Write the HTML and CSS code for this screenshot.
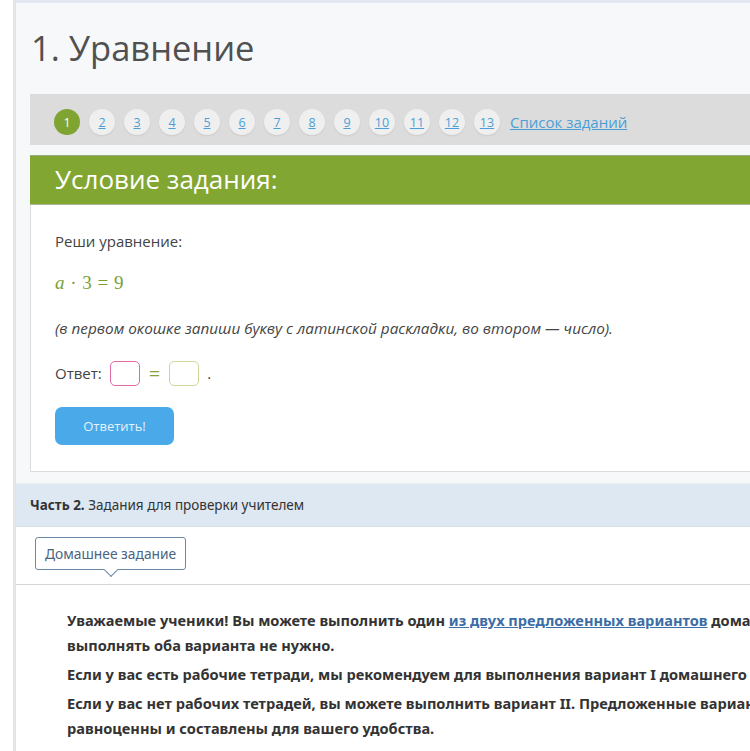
FILE: index.html
```html
<!DOCTYPE html>
<html lang="ru">
<head>
    <meta charset="UTF-8">
    <meta name="viewport" content="width=device-width, initial-scale=1.0">
    <title>1. Уравнение</title>
    <link rel="stylesheet" href="styles.css">
</head>
<body>
    <div class="page">
        <div class="task">
            <h1>1. Уравнение</h1>

            <div class="pager">
                <span class="pager-item active">1</span>
                <a class="pager-item" href="#">2</a>
                <a class="pager-item" href="#">3</a>
                <a class="pager-item" href="#">4</a>
                <a class="pager-item" href="#">5</a>
                <a class="pager-item" href="#">6</a>
                <a class="pager-item" href="#">7</a>
                <a class="pager-item" href="#">8</a>
                <a class="pager-item" href="#">9</a>
                <a class="pager-item" href="#">10</a>
                <a class="pager-item" href="#">11</a>
                <a class="pager-item" href="#">12</a>
                <a class="pager-item" href="#">13</a>
                <a class="pager-list" href="#">Список заданий</a>
            </div>

            <div class="task-head">Условие задания:</div>
            <div class="task-body">
                <p class="task-text">Реши уравнение:</p>
                <p class="formula"><i>a</i> · 3 = 9</p>
                <p class="hint">(в первом окошке запиши букву с латинской раскладки, во втором — число).</p>
                <div class="answer">
                    <span>Ответ:</span>
                    <span class="box box-pink"></span>
                    <span class="eq">=</span>
                    <span class="box box-green"></span>
                    <span>.</span>
                </div>
                <button class="submit">Ответить!</button>
            </div>
        </div>

        <div class="part">
            <b>Часть 2.</b> Задания для проверки учителем
        </div>

        <div class="tabs">
            <span class="tab">Домашнее задание</span>
        </div>

        <div class="homework">
            <p>Уважаемые ученики! Вы можете выполнить один <a href="#">из двух предложенных вариантов</a> домашнего задания,<br>выполнять оба варианта не нужно.</p>
            <p>Если у вас есть рабочие тетради, мы рекомендуем для выполнения вариант I домашнего задания.</p>
            <p>Если у вас нет рабочих тетрадей, вы можете выполнить вариант II. Предложенные варианты домашнего задания<br>равноценны и составлены для вашего удобства.</p>
        </div>
    </div>
</body>
</html>
```

FILE: styles.css
```css
* {
    margin: 0;
    padding: 0;
    box-sizing: border-box;
}

body {
    background: #fff;
    font-family: 'Open Sans', sans-serif;
    color: #444;
    overflow: hidden;
}

.page {
    width: 1200px;
    margin-left: 13px;
    border-left: 3px solid #e2e4e7;
    border-top: 3px solid #e1e8f0;
    background: #f7f8f9;
}

.task {
    padding-left: 14px;
}

h1 {
    font-size: 34.5px;
    font-weight: 400;
    line-height: 40px;
    color: #505050;
    padding: 25px 0 26px 1px;
}

.pager {
    display: flex;
    align-items: center;
    gap: 9px;
    height: 51px;
    padding: 5px 0 0 24px;
    background: #dcdcdc;
}

.pager-item {
    width: 26px;
    height: 26px;
    border-radius: 50%;
    background: #efefef;
    box-shadow: 0 1px 2px rgba(0, 0, 0, 0.08);
    display: flex;
    align-items: center;
    justify-content: center;
    font-size: 12.5px;
    color: #4a9fd8;
}

.pager-item.active {
    background: #7fa431;
    color: #fff;
    box-shadow: none;
}

.pager-list {
    font-size: 15px;
    color: #4a9fd8;
    margin-left: 1px;
}

.task-head {
    margin-top: 10px;
    height: 50px;
    background: #82a632;
    border-top: 1px solid #9aab86;
    border-bottom: 1px solid #a9b797;
    color: #fff;
    font-size: 26px;
    line-height: 46px;
    padding-left: 25px;
}

.task-body {
    background: #fff;
    border: 1px solid #dcdcdc;
    border-top: none;
    padding: 25px 24px 26px;
}

.task-text {
    font-size: 15px;
    line-height: 22px;
}

.formula {
    font-family: 'Liberation Serif', serif;
    font-size: 19px;
    word-spacing: 1px;
    color: #78a133;
    margin-top: 20px;
    line-height: 22px;
}

.hint {
    font-size: 15.3px;
    font-style: italic;
    margin-top: 23px;
    line-height: 22px;
}

.answer {
    display: flex;
    align-items: center;
    gap: 8px;
    font-size: 15px;
    margin-top: 21px;
    height: 26px;
}

.box {
    display: inline-block;
    width: 30px;
    height: 25px;
    border-radius: 5px;
    border: 1px solid #e06aa6;
}

.box-green {
    border-color: #c8d99a;
}

.eq {
    color: #7fa431;
    font-size: 20px;
    margin: 0 1px;
}

.submit {
    margin-top: 21px;
    width: 119px;
    height: 38px;
    border: none;
    border-radius: 7px;
    background: #4aa9e8;
    color: #e4f2fc;
    font-family: 'Open Sans', sans-serif;
    font-size: 13px;
}

.part {
    margin-top: 11px;
    height: 44px;
    background: #dde8f2;
    border-top: 1px solid #e8eef4;
    border-bottom: 1px solid #d6dde3;
    font-family: 'Noto Sans', sans-serif;
    font-size: 13.5px;
    line-height: 42px;
    color: #333;
    padding-left: 14px;
}

.tabs {
    background: #fff;
    border-bottom: 1px solid #d4d4d4;
    padding: 10px 0 14px 19px;
}

.tab {
    position: relative;
    display: inline-block;
    height: 33px;
    padding: 0 9px;
    border: 1px solid #6b88a6;
    border-radius: 3px;
    font-family: 'Noto Sans', sans-serif;
    font-size: 13.8px;
    line-height: 31px;
    color: #4a6482;
}

.tab::after {
    content: "";
    position: absolute;
    left: 70px;
    bottom: -6px;
    width: 9px;
    height: 9px;
    background: #fff;
    border-right: 1px solid #6b88a6;
    border-bottom: 1px solid #6b88a6;
    transform: rotate(45deg);
}

.homework {
    background: #fff;
    padding: 23px 0 20px 51px;
    font-family: 'Noto Sans', sans-serif;
    font-size: 14.6px;
    font-weight: 700;
    line-height: 25px;
    color: #333;
}

.homework p {
    margin-bottom: 4px;
}

.homework a {
    color: #3b6da6;
}
```
